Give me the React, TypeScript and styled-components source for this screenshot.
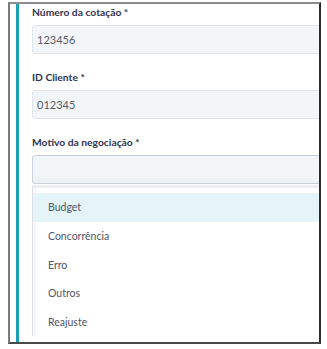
import styled, { createGlobalStyle } from 'styled-components';

const GlobalStyle = createGlobalStyle`
  body {
    margin: 0;
    background: #ffffff;
    font-family: 'Lato', 'Noto Sans', sans-serif;
  }
`;

const Frame = styled.div`
  margin: 2px 0 0 8px;
  width: 313px;
  height: 342px;
  box-sizing: border-box;
  border-top: 2px solid #8c8c8c;
  border-left: 2px solid #7a7a7a;
  border-right: 2px solid #2b2b2b;
  border-bottom: 2px solid #4a4a4a;
  background: #ffffff;
  display: flex;
  overflow: hidden;
`;

const AccentBar = styled.div`
  width: 3px;
  margin-left: 6px;
  background: #1a9fb3;
  flex-shrink: 0;
`;

const Form = styled.div`
  flex: 1;
  min-width: 0;
  margin-left: 13px;
  margin-right: -12px;
  padding-top: 2px;
  display: flex;
  flex-direction: column;
`;

const Field = styled.div`
  display: flex;
  flex-direction: column;
  & + & {
    margin-top: 17px;
  }
`;

const Label = styled.label`
  font-size: 10.3px;
  line-height: 13px;
  font-weight: 700;
  color: #2f3350;
  margin-bottom: 6px;
`;

const Input = styled.div<{ $select?: boolean }>`
  height: 29px;
  box-sizing: border-box;
  border: 1px solid ${(p) => (p.$select ? '#c9d1dc' : '#dfe5ec')};
  border-radius: 3px;
  background: ${(p) =>
    p.$select ? 'linear-gradient(#f3f6f9, #f3f6f9 70%, #eceff3)' : '#f3f6f9'};
  padding: 0 4px;
  display: flex;
  align-items: center;
  font-size: 11px;
  color: #555a66;
`;

const List = styled.div`
  margin-top: 1px;
  border-top: 3px solid #eceef1;
  border-left: 1px solid #dde1e6;
  box-shadow: inset 6px 0 6px -4px #f0f2f4;
  padding-top: 5px;
`;

const Option = styled.div<{ $active?: boolean }>`
  height: 28.7px;
  display: flex;
  align-items: center;
  padding-left: 15px;
  font-size: 10.5px;
  color: #4f5566;
  background: ${(p) => (p.$active ? '#e5f4f8' : 'transparent')};
`;

const options = ['Budget', 'Concorrência', 'Erro', 'Outros', 'Reajuste'];

export default function App() {
  return (
    <>
      <GlobalStyle />
      <Frame>
        <AccentBar />
        <Form>
          <Field>
            <Label>Número da cotação *</Label>
            <Input>123456</Input>
          </Field>
          <Field>
            <Label>ID Cliente *</Label>
            <Input>012345</Input>
          </Field>
          <Field>
            <Label>Motivo da negociação *</Label>
            <Input $select />
          </Field>
          <List>
            {options.map((o, i) => (
              <Option key={o} $active={i === 0}>
                {o}
              </Option>
            ))}
          </List>
        </Form>
      </Frame>
    </>
  );
}
